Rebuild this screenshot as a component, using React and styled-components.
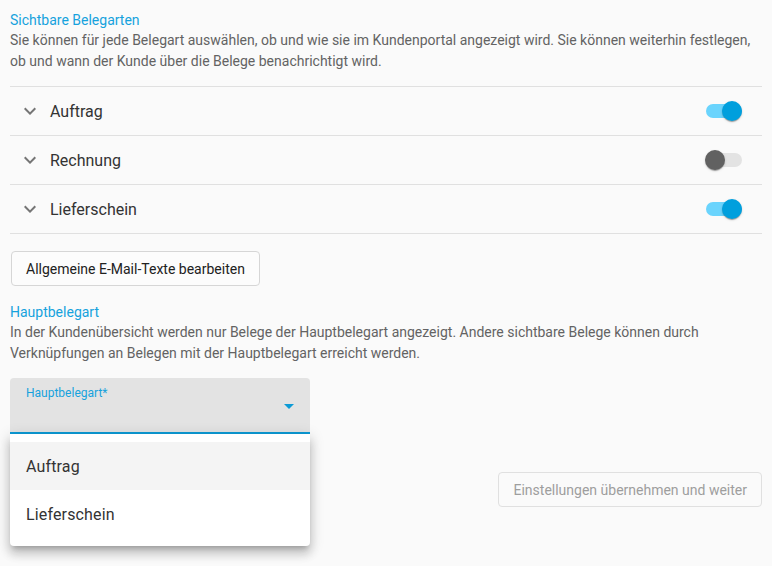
import React from "react";
import styled, { createGlobalStyle } from "styled-components";

const Global = createGlobalStyle`
  html, body { margin: 0; padding: 0; background: #fafafa; }
  body { font-family: Roboto, "Noto Sans", Arial, sans-serif; -webkit-font-smoothing: antialiased; }
  * { box-sizing: border-box; }
`;

const Page = styled.div`
  width: 772px;
  height: 566px;
  padding: 10px 10px 0 10px;
  background: #fafafa;
  overflow: hidden;
`;

const SectionTitle = styled.div`
  font-size: 14px;
  line-height: 20px;
  color: #16a2dd;
  margin-top: ${(p) => p.$mt || 0}px;
`;

const Description = styled.div`
  font-size: 14px;
  line-height: 20.5px;
  color: #636363;
`;

const List = styled.div`
  margin-top: 15px;
  border-top: 1px solid #e0e0e0;
`;

const Row = styled.div`
  display: flex;
  align-items: center;
  height: 49px;
  border-bottom: 1px solid #e0e0e0;
  padding: 0 20px 0 8px;
`;

const Chevron = styled.svg`
  width: 24px;
  height: 24px;
  fill: #757575;
  flex: none;
`;

const RowLabel = styled.div`
  flex: 1;
  margin-left: 8px;
  font-size: 16px;
  color: #333;
`;

const Track = styled.div`
  position: relative;
  width: 36px;
  height: 14px;
  border-radius: 7px;
  background: ${(p) => (p.$on ? "#6ad4fd" : "#e3e3e3")};
`;

const Thumb = styled.div`
  position: absolute;
  top: -3px;
  left: ${(p) => (p.$on ? "16px" : "-1px")};
  width: 20px;
  height: 20px;
  border-radius: 50%;
  background: ${(p) => (p.$on ? "#009fdd" : "#616161")};
  box-shadow: 0 2px 1px -1px rgba(0,0,0,0.2), 0 1px 1px 0 rgba(0,0,0,0.14), 0 1px 3px 0 rgba(0,0,0,0.12);
`;

const OutlineButton = styled.button`
  display: inline-block;
  font-family: inherit;
  font-size: 14px;
  line-height: 20px;
  height: 35px;
  padding: 0 14px;
  border-radius: 4px;
  border: 1px solid ${(p) => (p.disabled ? "#e0e0e0" : "#d6d6d6")};
  background: ${(p) => (p.disabled ? "#fafafa" : "#fcfcfc")};
  color: ${(p) => (p.disabled ? "#9e9e9e" : "#212121")};
`;

const ButtonWrap = styled.div`
  margin-top: 17px;
  margin-left: 1px;
  height: 35px;
`;

const SelectArea = styled.div`
  position: relative;
  width: 300px;
  margin-top: 15px;
`;

const SelectField = styled.div`
  position: relative;
  height: 56px;
  background: #e3e3e3;
  border-radius: 4px 4px 0 0;
  border-bottom: 2px solid #0d9bd6;
  padding: 7px 16px 0;
`;

const SelectLabel = styled.div`
  font-size: 12px;
  line-height: 16px;
  color: #16a2dd;
`;

const DropIcon = styled.svg`
  position: absolute;
  right: 9px;
  top: 16px;
  width: 24px;
  height: 24px;
  fill: #0d9bd6;
`;

const Menu = styled.div`
  position: absolute;
  left: 0;
  top: 56px;
  width: 300px;
  background: #fff;
  border-radius: 0 0 4px 4px;
  padding: 8px 0;
  box-shadow: 0 5px 5px -3px rgba(0,0,0,0.2), 0 8px 10px 1px rgba(0,0,0,0.14), 0 3px 14px 2px rgba(0,0,0,0.12);
  z-index: 2;
`;

const MenuItem = styled.div`
  height: 48px;
  display: flex;
  align-items: center;
  padding: 0 16px;
  font-size: 16px;
  color: #333;
  letter-spacing: 0.15px;
  background: ${(p) => (p.$active ? "#f4f4f4" : "transparent")};
`;

const Footer = styled.div`
  display: flex;
  justify-content: flex-end;
  margin-top: 38px;
`;

const rows = [
  { label: "Auftrag", on: true },
  { label: "Rechnung", on: false },
  { label: "Lieferschein", on: true },
];

export default function App() {
  return (
    <Page>
      <Global />
      <SectionTitle>Sichtbare Belegarten</SectionTitle>
      <Description>
        Sie können für jede Belegart auswählen, ob und wie sie im Kundenportal angezeigt wird. Sie können weiterhin festlegen,
        <br />
        ob und wann der Kunde über die Belege benachrichtigt wird.
      </Description>
      <List>
        {rows.map((r) => (
          <Row key={r.label}>
            <Chevron viewBox="0 0 24 24">
              <path d="M16.59 8.59 12 13.17 7.41 8.59 6 10l6 6 6-6z" />
            </Chevron>
            <RowLabel>{r.label}</RowLabel>
            <Track $on={r.on}>
              <Thumb $on={r.on} />
            </Track>
          </Row>
        ))}
      </List>
      <ButtonWrap>
        <OutlineButton>Allgemeine E-Mail-Texte bearbeiten</OutlineButton>
      </ButtonWrap>
      <SectionTitle $mt={16}>Hauptbelegart</SectionTitle>
      <Description>
        In der Kundenübersicht werden nur Belege der Hauptbelegart angezeigt. Andere sichtbare Belege können durch
        <br />
        Verknüpfungen an Belegen mit der Hauptbelegart erreicht werden.
      </Description>
      <SelectArea>
        <SelectField>
          <SelectLabel>Hauptbelegart*</SelectLabel>
          <DropIcon viewBox="0 0 24 24">
            <path d="M7 10l5 5 5-5z" />
          </DropIcon>
        </SelectField>
        <Menu>
          <MenuItem $active>Auftrag</MenuItem>
          <MenuItem>Lieferschein</MenuItem>
        </Menu>
      </SelectArea>
      <Footer>
        <OutlineButton disabled>Einstellungen übernehmen und weiter</OutlineButton>
      </Footer>
    </Page>
  );
}
